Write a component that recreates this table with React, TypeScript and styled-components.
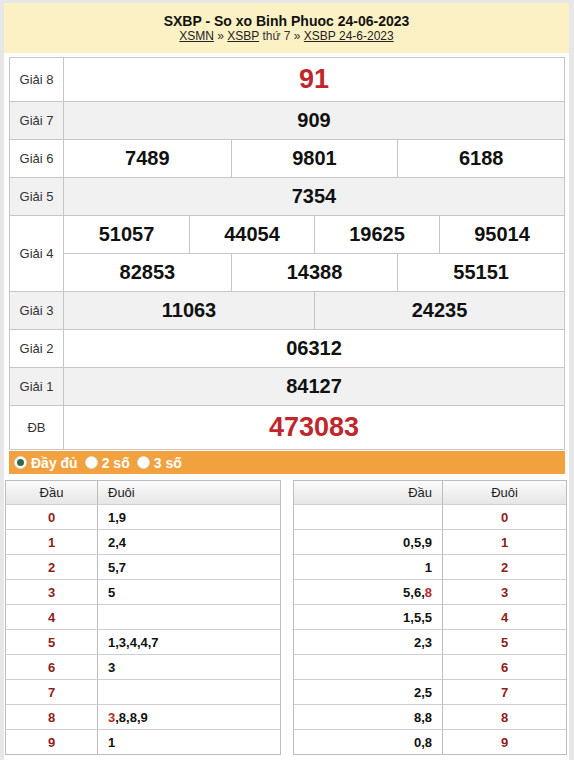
import React from "react";
import styled, { createGlobalStyle } from "styled-components";

const Global = createGlobalStyle`
  html, body { margin: 0; padding: 0; background: #e7e7e7; }
  body { font-family: "Liberation Sans", Arial, sans-serif; color: #222; }
`;

const Page = styled.div`
  margin: 3px 5px 0 4px;
  background: #fff;
  height: 757px;
  overflow: hidden;
`;

const Header = styled.div`
  background: #fcf1c4;
  height: 50px;
  text-align: center;
  box-sizing: border-box;
  padding-top: 10px;
`;

const Title = styled.h1`
  margin: 0;
  font-size: 14px;
  font-weight: bold;
  line-height: 16px;
  color: #111;
`;

const Crumbs = styled.div`
  font-size: 12px;
  line-height: 15px;
  color: #333;
  a { color: #222; text-decoration: underline; }
`;

const PrizeTable = styled.div`
  margin: 4px 4px 0 5px;
  border: 1px solid #c6c6c6;
  border-bottom: none;
`;

const Row = styled.div<{ $h: number; $alt?: boolean }>`
  display: grid;
  grid-template-columns: 54px 1fr;
  min-height: ${(p) => p.$h}px;
  background: ${(p) => (p.$alt ? "#f1f1f1" : "#fff")};
  border-bottom: 1px solid #c6c6c6;
`;

const Label = styled.div`
  display: flex;
  align-items: center;
  justify-content: center;
  border-right: 1px solid #c6c6c6;
  font-size: 13px;
  color: #333;
`;

const Lines = styled.div`
  display: flex;
  flex-direction: column;
`;

const Line = styled.div<{ $cols: number; $h: number; $top?: boolean }>`
  display: grid;
  grid-template-columns: repeat(${(p) => p.$cols}, 1fr);
  height: ${(p) => p.$h}px;
  border-top: ${(p) => (p.$top ? "1px solid #c6c6c6" : "none")};
`;

const Num = styled.div<{ $big?: boolean }>`
  display: flex;
  align-items: center;
  justify-content: center;
  font-weight: bold;
  font-size: ${(p) => (p.$big ? "27px" : "20px")};
  color: ${(p) => (p.$big ? "#c0272d" : "#111")};
  & + & { border-left: 1px solid #c6c6c6; }
`;

const OptionBar = styled.div`
  margin: 1px 4px 0 5px;
  height: 23px;
  background: #f2a13f;
  display: flex;
  align-items: center;
  padding-left: 5px;
  gap: 7px;
`;

const Option = styled.label`
  display: flex;
  align-items: center;
  gap: 4px;
  color: #fff;
  font-weight: bold;
  font-size: 14px;
`;

const Radio = styled.span<{ $on?: boolean }>`
  width: 13px;
  height: 13px;
  border-radius: 50%;
  background: #fff;
  box-sizing: border-box;
  border: 1px solid #ddd;
  display: inline-flex;
  align-items: center;
  justify-content: center;
  &::after {
    content: "";
    width: 7px;
    height: 7px;
    border-radius: 50%;
    background: ${(p) => (p.$on ? "#2f6b4a" : "transparent")};
  }
`;

const LotoWrap = styled.div`
  display: grid;
  grid-template-columns: 276px 274px;
  gap: 12px;
  margin: 6px 0 0 1px;
`;

const Loto = styled.div<{ $split: number }>`
  border: 1px solid #bdbdbd;
  display: grid;
  grid-template-columns: ${(p) => p.$split}px 1fr;
`;

const LHead = styled.div<{ $align: string }>`
  height: 23px;
  display: flex;
  align-items: center;
  justify-content: ${(p) => p.$align};
  padding: 0 10px;
  font-size: 13px;
  color: #222;
  background: linear-gradient(#fbfbfb, #e6e6e6);
  border-bottom: 1px solid #d0d0d0;
  &:nth-child(odd) { border-right: 1px solid #bdbdbd; }
`;

const LCell = styled.div<{ $align: string; $red?: boolean; $last?: boolean }>`
  height: 24px;
  display: flex;
  align-items: center;
  justify-content: ${(p) => p.$align};
  padding: 0 10px;
  font-size: 13px;
  font-weight: bold;
  color: ${(p) => (p.$red ? "#8e1c1c" : "#111")};
  border-bottom: ${(p) => (p.$last ? "none" : "1px solid #cfcfcf")};
  &:nth-child(odd) { border-right: 1px solid #bdbdbd; }
`;

const Red = styled.span`
  color: #b52a2a;
`;

type Seg = string | { red: string };

const renderSeg = (segs: Seg[]) =>
  segs.map((s, i) =>
    typeof s === "string" ? <React.Fragment key={i}>{s}</React.Fragment> : <Red key={i}>{s.red}</Red>
  );

const dauList: Seg[][] = [
  ["1,9"], ["2,4"], ["5,7"], ["5"], [], ["1,3,4,4,7"], ["3"], [], [{ red: "3" }, ",8,8,9"], ["1"],
];
const duoiList: Seg[][] = [
  [], ["0,5,9"], ["1"], ["5,6,", { red: "8" }], ["1,5,5"], ["2,3"], [], ["2,5"], ["8,8"], ["0,8"],
];

export default function App() {
  return (
    <>
      <Global />
      <Page>
        <Header>
          <Title>SXBP - So xo Binh Phuoc 24-06-2023</Title>
          <Crumbs>
            <a href="#">XSMN</a> » <a href="#">XSBP</a> thứ 7 » <a href="#">XSBP 24-6-2023</a>
          </Crumbs>
        </Header>

        <PrizeTable>
          <Row $h={43}>
            <Label>Giải 8</Label>
            <Line $cols={1} $h={43}><Num $big>91</Num></Line>
          </Row>
          <Row $h={37} $alt>
            <Label>Giải 7</Label>
            <Line $cols={1} $h={37}><Num>909</Num></Line>
          </Row>
          <Row $h={37}>
            <Label>Giải 6</Label>
            <Line $cols={3} $h={37}><Num>7489</Num><Num>9801</Num><Num>6188</Num></Line>
          </Row>
          <Row $h={37} $alt>
            <Label>Giải 5</Label>
            <Line $cols={1} $h={37}><Num>7354</Num></Line>
          </Row>
          <Row $h={75}>
            <Label>Giải 4</Label>
            <Lines>
              <Line $cols={4} $h={37}><Num>51057</Num><Num>44054</Num><Num>19625</Num><Num>95014</Num></Line>
              <Line $cols={3} $h={37} $top><Num>82853</Num><Num>14388</Num><Num>55151</Num></Line>
            </Lines>
          </Row>
          <Row $h={37} $alt>
            <Label>Giải 3</Label>
            <Line $cols={2} $h={37}><Num>11063</Num><Num>24235</Num></Line>
          </Row>
          <Row $h={37}>
            <Label>Giải 2</Label>
            <Line $cols={1} $h={37}><Num>06312</Num></Line>
          </Row>
          <Row $h={37} $alt>
            <Label>Giải 1</Label>
            <Line $cols={1} $h={37}><Num>84127</Num></Line>
          </Row>
          <Row $h={43}>
            <Label>ĐB</Label>
            <Line $cols={1} $h={43}><Num $big>473083</Num></Line>
          </Row>
        </PrizeTable>

        <OptionBar>
          <Option><Radio $on />Đầy đủ</Option>
          <Option><Radio />2 số</Option>
          <Option><Radio />3 số</Option>
        </OptionBar>

        <LotoWrap>
          <Loto $split={92}>
            <LHead $align="center">Đầu</LHead>
            <LHead $align="flex-start">Đuôi</LHead>
            {dauList.map((v, i) => (
              <React.Fragment key={i}>
                <LCell $align="center" $red $last={i === 9}>{i}</LCell>
                <LCell $align="flex-start" $last={i === 9}>{renderSeg(v)}</LCell>
              </React.Fragment>
            ))}
          </Loto>
          <Loto $split={149}>
            <LHead $align="flex-end">Đầu</LHead>
            <LHead $align="center">Đuôi</LHead>
            {duoiList.map((v, i) => (
              <React.Fragment key={i}>
                <LCell $align="flex-end" $last={i === 9}>{renderSeg(v)}</LCell>
                <LCell $align="center" $red $last={i === 9}>{i}</LCell>
              </React.Fragment>
            ))}
          </Loto>
        </LotoWrap>
      </Page>
    </>
  );
}
